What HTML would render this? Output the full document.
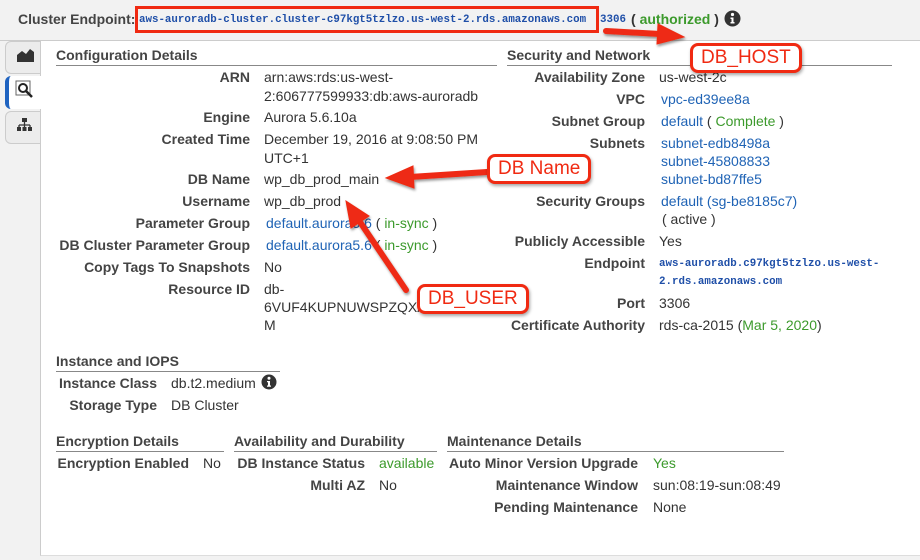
<!DOCTYPE html>
<html><head><meta charset="utf-8"><style>
*{margin:0;padding:0;box-sizing:border-box}
body{width:920px;height:560px;overflow:hidden;background:#f2f2f2;font-family:"Liberation Sans",sans-serif;font-size:14px;color:#333;position:relative}
div,span.a{position:absolute;white-space:nowrap;line-height:18px}
.b{font-weight:bold;color:#444}
.r{text-align:right}
.lk{color:#1f63b5}
.g{color:#3c9a2c}
.h{font-weight:bold;font-size:14px;color:#444;border-bottom:1px solid #888;padding-bottom:1px;height:20px}
.m{font-family:"Liberation Mono",monospace;font-size:10.8px;font-weight:bold;color:#1f4fa8}
.ann{border:3px solid #f02a12;border-radius:8px;background:#fff;color:#f02a12;font-size:19px;line-height:24px;padding:0 8px;box-shadow:1px 2px 3px rgba(0,0,0,.35)}
</style></head><body>
<div style="left:0;top:40px;width:920px;height:1px;background:#ccc"></div>
<div style="left:40px;top:41px;width:880px;height:515px;background:#fff;border-left:1px solid #ccc;border-bottom:1px solid #ddd"></div>
<!-- tabs -->
<div style="left:5px;top:41px;width:36px;height:33px;background:#ececec;border:1px solid #ccc;border-radius:6px 0 0 6px"></div>
<svg style="position:absolute;left:17px;top:48px" width="17" height="14"><path d="M0 14V7L5 3L9 6L13 1L17 4V14Z" fill="#333"/></svg>
<div style="left:5px;top:76px;width:36px;height:33px;background:#fff;border-left:4px solid #1f63c0;border-radius:6px 0 0 6px"></div>
<svg style="position:absolute;left:15px;top:80px" width="20" height="20"><rect x="1" y="1" width="14" height="14" fill="#fff" stroke="#666"/><circle cx="8" cy="8" r="4" fill="none" stroke="#222" stroke-width="2"/><path d="M11 11L17 17" stroke="#222" stroke-width="2.5"/></svg>
<div style="left:5px;top:111px;width:36px;height:33px;background:#ececec;border:1px solid #ccc;border-radius:6px 0 0 6px"></div>
<svg style="position:absolute;left:17px;top:118px" width="15" height="14"><rect x="5" y="0" width="5" height="4" fill="#333"/><path d="M7.5 4V7M2 7H13M2 7V9M7.5 7V9M13 7V9" stroke="#333" stroke-width="1.3" fill="none"/><rect x="0" y="9" width="4" height="4" fill="#333"/><rect x="5.5" y="9" width="4" height="4" fill="#333"/><rect x="11" y="9" width="4" height="4" fill="#333"/></svg>
<!-- top -->
<div class="b" style="left:18px;top:10px;font-size:14px">Cluster Endpoint:</div>
<div style="left:135px;top:6px;width:464px;height:27px;border:3px solid #f02a12"></div>
<div class="m" style="left:139px;top:11px">aws-auroradb-cluster.cluster-c97kgt5tzlzo.us-west-2.rds.amazonaws.com</div>
<div class="m" style="left:600px;top:11px">3306</div>
<div style="left:631px;top:10px;font-weight:bold;color:#333">( <span class="g">authorized</span> )</div>
<svg style="position:absolute;left:724px;top:10px" width="17" height="17"><circle cx="8.5" cy="8.5" r="8" fill="#333"/><circle cx="8.5" cy="4.5" r="1.6" fill="#fff"/><path d="M6.5 7.5H9.5V12H10.5V13.5H6.5V12H7.5V9H6.5Z" fill="#fff"/></svg>
<!-- config -->
<div class="h" style="left:56px;top:46px;width:441px">Configuration Details</div>
<div class="b r" style="left:0;width:250px;top:68px">ARN</div>
<div style="left:264px;top:68px">arn:aws:rds:us-west-</div>
<div style="left:264px;top:87px">2:606777599933:db:aws-auroradb</div>
<div class="b r" style="left:0;width:250px;top:108px">Engine</div><div style="left:264px;top:108px">Aurora 5.6.10a</div>
<div class="b r" style="left:0;width:250px;top:130px">Created Time</div>
<div style="left:264px;top:130px">December 19, 2016 at 9:08:50 PM</div>
<div style="left:264px;top:149px">UTC+1</div>
<div class="b r" style="left:0;width:250px;top:170px">DB Name</div><div style="left:264px;top:170px">wp_db_prod_main</div>
<div class="b r" style="left:0;width:250px;top:192px">Username</div><div style="left:264px;top:192px">wp_db_prod</div>
<div class="b r" style="left:0;width:250px;top:214px">Parameter Group</div><div style="left:266px;top:214px"><span class="lk">default.aurora5.6</span> ( <span class="g">in-sync</span> )</div>
<div class="b r" style="left:0;width:250px;top:236px">DB Cluster Parameter Group</div><div style="left:266px;top:236px"><span class="lk">default.aurora5.6</span> ( <span class="g">in-sync</span> )</div>
<div class="b r" style="left:0;width:250px;top:258px">Copy Tags To Snapshots</div><div style="left:264px;top:258px">No</div>
<div class="b r" style="left:0;width:250px;top:280px">Resource ID</div>
<div style="left:264px;top:280px">db-</div>
<div style="left:264px;top:298px">6VUF4KUPNUWSPZQXA</div>
<div style="left:264px;top:316px">M</div>
<!-- security -->
<div class="h" style="left:507px;top:46px;width:385px">Security and Network</div>
<div class="b r" style="left:0;width:645px;top:68px">Availability Zone</div><div style="left:659px;top:68px">us-west-2c</div>
<div class="b r" style="left:0;width:645px;top:90px">VPC</div><div class="lk" style="left:661px;top:90px">vpc-ed39ee8a</div>
<div class="b r" style="left:0;width:645px;top:112px">Subnet Group</div><div style="left:661px;top:112px"><span class="lk">default</span> ( <span class="g">Complete</span> )</div>
<div class="b r" style="left:0;width:645px;top:134px">Subnets</div>
<div class="lk" style="left:661px;top:134px">subnet-edb8498a</div>
<div class="lk" style="left:661px;top:152px">subnet-45808833</div>
<div class="lk" style="left:661px;top:170px">subnet-bd87ffe5</div>
<div class="b r" style="left:0;width:645px;top:192px">Security Groups</div><div class="lk" style="left:661px;top:192px">default (sg-be8185c7)</div>
<div style="left:662px;top:210px">( active )</div>
<div class="b r" style="left:0;width:645px;top:232px">Publicly Accessible</div><div style="left:659px;top:232px">Yes</div>
<div class="b r" style="left:0;width:645px;top:254px">Endpoint</div>
<div class="m" style="left:659px;top:255px">aws-auroradb.c97kgt5tzlzo.us-west-</div>
<div class="m" style="left:659px;top:273px">2.rds.amazonaws.com</div>
<div class="b r" style="left:0;width:645px;top:294px">Port</div><div style="left:659px;top:294px">3306</div>
<div class="b r" style="left:0;width:645px;top:316px">Certificate Authority</div><div style="left:659px;top:316px">rds-ca-2015 (<span class="g">Mar 5, 2020</span>)</div>
<!-- instance -->
<div class="h" style="left:56px;top:352px;width:224px">Instance and IOPS</div>
<div class="b r" style="left:0;width:157px;top:374px">Instance Class</div><div style="left:171px;top:374px">db.t2.medium</div>
<svg style="position:absolute;left:261px;top:374px" width="16" height="16"><circle cx="8" cy="8" r="7.5" fill="#333"/><circle cx="8" cy="4.3" r="1.5" fill="#fff"/><path d="M6 7H9V11.5H10V12.8H6V11.5H7V8.3H6Z" fill="#fff"/></svg>
<div class="b r" style="left:0;width:157px;top:396px">Storage Type</div><div style="left:171px;top:396px">DB Cluster</div>
<!-- bottom -->
<div class="h" style="left:56px;top:432px;width:168px">Encryption Details</div>
<div class="b r" style="left:0;width:189px;top:454px">Encryption Enabled</div><div style="left:203px;top:454px">No</div>
<div class="h" style="left:234px;top:432px;width:203px">Availability and Durability</div>
<div class="b r" style="left:0;width:365px;top:454px">DB Instance Status</div><div class="g" style="left:379px;top:454px">available</div>
<div class="b r" style="left:0;width:365px;top:476px">Multi AZ</div><div style="left:379px;top:476px">No</div>
<div class="h" style="left:447px;top:432px;width:337px">Maintenance Details</div>
<div class="b r" style="left:0;width:638px;top:454px">Auto Minor Version Upgrade</div><div class="g" style="left:653px;top:454px">Yes</div>
<div class="b r" style="left:0;width:638px;top:476px">Maintenance Window</div><div style="left:653px;top:476px">sun:08:19-sun:08:49</div>
<div class="b r" style="left:0;width:638px;top:498px">Pending Maintenance</div><div style="left:653px;top:498px">None</div>
<!-- arrows -->
<svg style="position:absolute;left:0;top:0" width="920" height="560">
<defs><filter id="s"><feDropShadow dx="1" dy="2" stdDeviation="1.2" flood-opacity=".4"/></filter></defs>
<g fill="#ee2a12" stroke="#ee2a12" filter="url(#s)">
<path d="M606 31L660 34" stroke-width="6" stroke-linecap="round"/><polygon points="658,24 684,37 657,44"/>
<path d="M487 172L410 177" stroke-width="6" stroke-linecap="round"/><polygon points="413,166 386,178 414,188"/>
<path d="M406 290L360 222" stroke-width="6" stroke-linecap="round"/><polygon points="351,228 346,201 369,216"/>
</g></svg>
<div class="ann" style="left:690px;top:43px">DB_HOST</div>
<div class="ann" style="left:487px;top:154px">DB Name</div>
<div class="ann" style="left:417px;top:284px">DB_USER</div>
</body></html>
